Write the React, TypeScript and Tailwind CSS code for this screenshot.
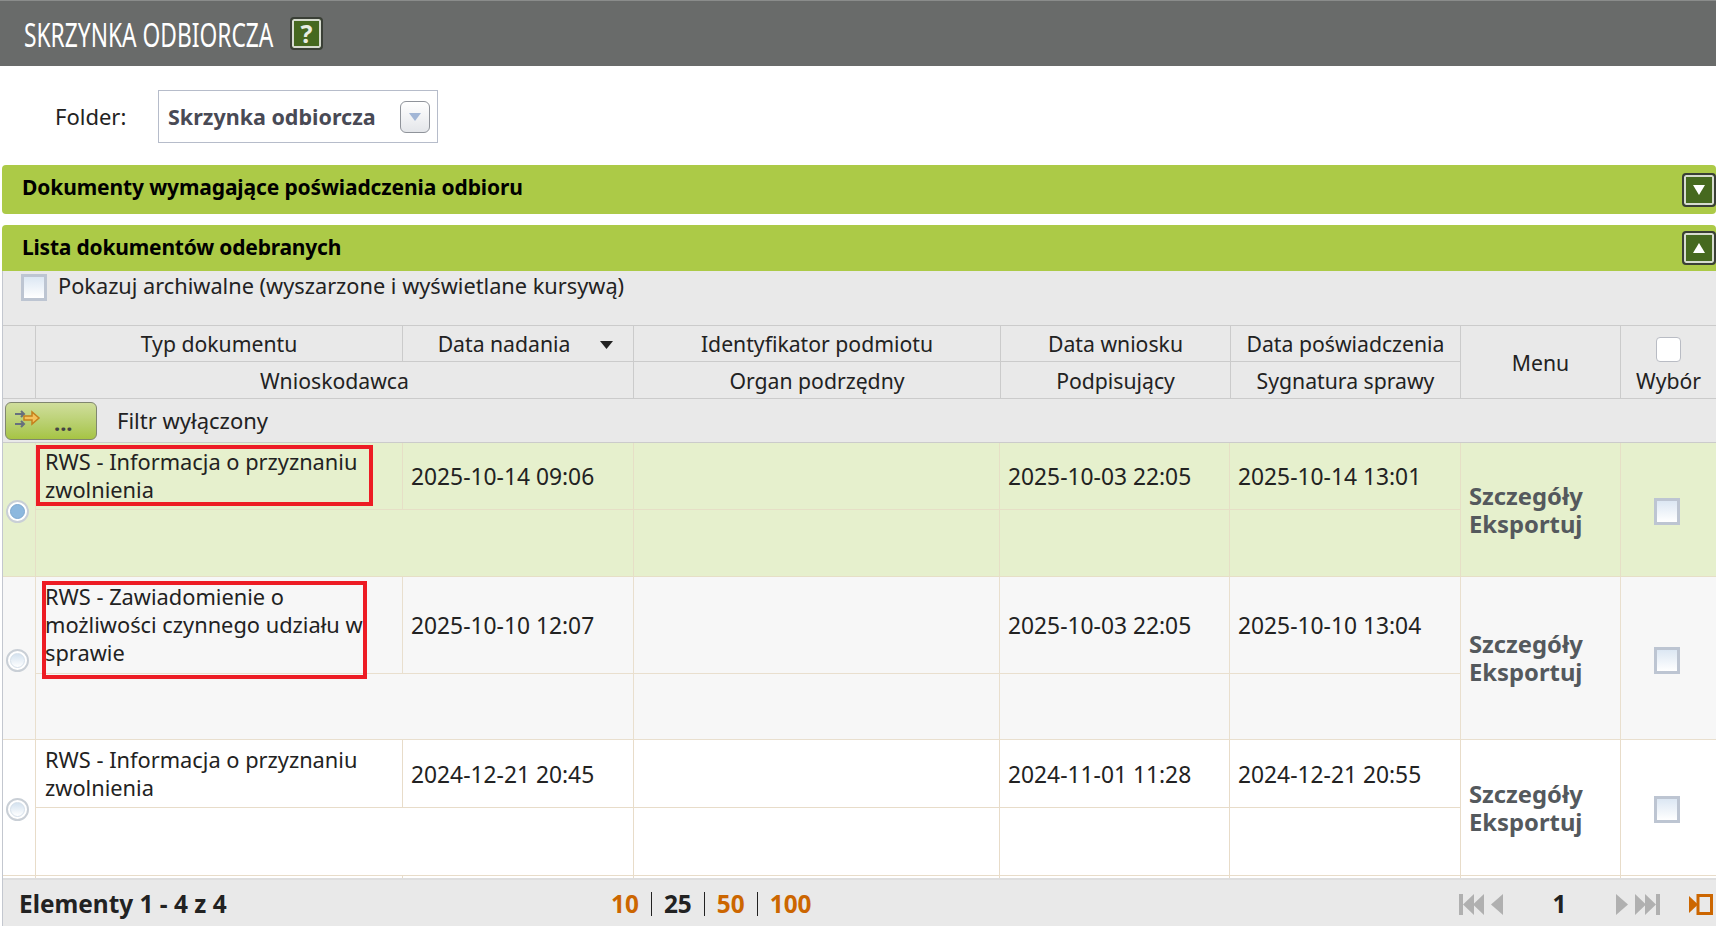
const font = { fontFamily: '"Noto Sans", Tahoma, sans-serif' }

const cols = "grid-cols-[33px_367px_231px_366px_230px_231px_160px_95px]"
const headCols = "grid-cols-[33px_367px_231px_367px_230px_230px_160px_95px]"

function HelpButton({ children }: { children: React.ReactNode }) {
  return (
    <span className="flex h-[33px] w-[33px] items-center justify-center rounded-[4px] border-2 border-[#3a3f36] bg-[#46691f] shadow-[inset_0_0_0_2px_#d7dccf]">
      {children}
    </span>
  )
}

function ToggleButton({ up }: { up?: boolean }) {
  return (
    <span className="flex h-[34px] w-[34px] items-center justify-center rounded-[4px] border-2 border-[#3a3f36] bg-[#46691f] shadow-[inset_0_0_0_2px_#d7dccf]">
      <svg width="14" height="12" viewBox="0 0 14 12">
        <path d={up ? "M7 1 13 11H1Z" : "M7 11 1 1H13Z"} fill="#fff" />
      </svg>
    </span>
  )
}

function Check() {
  return (
    <span className="block h-[27px] w-[26px] border-[3px] border-[#bdc5d2] bg-gradient-to-b from-[#dce7f3] to-white" />
  )
}

function Radio({ on }: { on?: boolean }) {
  return (
    <span className="flex h-[23px] w-[23px] items-center justify-center rounded-full border-2 border-[#c9cfd6] bg-white">
      <span
        className={
          on
            ? "h-[15px] w-[15px] rounded-full border border-[#7ea8cf] bg-[#8db8de]"
            : "h-[15px] w-[15px] rounded-full border border-[#d5e0ea] bg-gradient-to-b from-[#d4e2ef] to-white"
        }
      />
    </span>
  )
}

function Row({
  bg,
  line,
  rows,
  doc,
  sent,
  filed,
  signed,
  box,
  on,
}: {
  bg: string
  line: string
  rows: string
  doc: string
  sent: string
  filed: string
  signed: string
  box?: string
  on?: boolean
}) {
  return (
    <div className={`grid ${cols} ${rows} ${bg} ${line} border-b`}>
      <div className={`row-span-2 flex items-center justify-center border-r pr-[3px] pt-[4px] ${line}`}>
        <Radio on={on} />
      </div>
      <div className={`relative flex items-center border-r border-b pl-[9px] pr-2 text-[21.8px] leading-[28px] ${line}`}>
        {doc}
        {box && <span className={`absolute border-[4px] border-[#ed1c24] ${box}`} />}
      </div>
      <div className={`flex items-center border-r border-b pl-[8px] pt-[3px] text-[22.8px] ${line}`}>{sent}</div>
      <div className={`border-r border-b ${line}`} />
      <div className={`flex items-center border-r border-b pl-[8px] pt-[3px] text-[22.8px] ${line}`}>{filed}</div>
      <div className={`flex items-center border-r border-b pl-[8px] pt-[3px] text-[22.8px] ${line}`}>{signed}</div>
      <div className={`row-span-2 flex flex-col justify-center border-r pl-[8px] text-[23.8px] font-bold leading-[28px] text-[#54595d] ${line}`}>
        <span>Szczegóły</span>
        <span>Eksportuj</span>
      </div>
      <div className="row-span-2 flex items-center justify-center pr-[4px] pt-[4px]">
        <Check />
      </div>
      <div className={`col-span-2 border-r ${line}`} />
      <div className={`border-r ${line}`} />
      <div className={`border-r ${line}`} />
      <div className={`border-r ${line}`} />
    </div>
  )
}

function Head({ className, children }: { className?: string; children?: React.ReactNode }) {
  return <div className={`flex items-center justify-center border-r border-[#cbcbcb] pt-[1px] ${className ?? ""}`}>{children}</div>
}

function FirstIcon({ flip }: { flip?: boolean }) {
  return (
    <svg width="25" height="21" viewBox="0 0 25 21" className={flip ? "-scale-x-100" : ""}>
      <path d="M0 0H4V21H0ZM15 0V21L4 10.5ZM25 0V21L14 10.5Z" fill="#b0b0b0" />
    </svg>
  )
}

function PrevIcon({ flip }: { flip?: boolean }) {
  return (
    <svg width="12" height="21" viewBox="0 0 12 21" className={flip ? "-scale-x-100" : ""}>
      <path d="M12 0V21L0 10.5Z" fill="#b0b0b0" />
    </svg>
  )
}

export default function App() {
  return (
    <div className="h-[926px] w-[1716px] overflow-hidden bg-white text-[22px] text-[#222]" style={font}>
      <header className="flex h-[66px] items-center gap-[14px] border-t border-[#8a8c8b] bg-[#696b6a] pl-6">
        <h1 className="w-[252px] whitespace-nowrap pt-[2px] text-[33px] font-normal text-white">
          <span className="inline-block origin-left scale-x-[0.69]">SKRZYNKA ODBIORCZA</span>
        </h1>
        <HelpButton>
          <span className="text-[25px] font-bold leading-none text-[#e9eee2]">?</span>
        </HelpButton>
      </header>

      <div className="flex h-[99px] items-center pl-[55px] pt-[2px]">
        <span className="w-[103px]">Folder:</span>
        <div className="flex h-[53px] w-[280px] items-center justify-between border border-[#b6bcca] pl-[9px] pr-[7px]">
          <span className="whitespace-nowrap pt-[2px] text-[21.5px] font-bold text-[#494a55]">Skrzynka odbiorcza</span>
          <span className="flex h-[32px] w-[30px] items-center justify-center rounded-[6px] border border-[#8f939a] bg-gradient-to-b from-white to-[#e4e6ea]">
            <svg width="12" height="8" viewBox="0 0 12 8">
              <path d="M0 0H12L6 8Z" fill="#a2b6d6" />
            </svg>
          </span>
        </div>
      </div>

      <div className="ml-[2px] flex h-[49px] items-center justify-between rounded-[4px] bg-[#acca47] pl-[20px] text-[21px] font-bold tracking-[-0.12px] text-black">
        <span className="pb-[4px]">Dokumenty wymagające poświadczenia odbioru</span>
        <ToggleButton />
      </div>

      <div className="ml-[2px] mt-[11px] flex h-[46px] items-center justify-between rounded-t-[4px] bg-[#acca47] pl-[20px] text-[21px] font-bold tracking-[-0.2px] text-black">
        <span className="pb-[1px]">Lista dokumentów odebranych</span>
        <ToggleButton up />
      </div>

      <div className="ml-[2px] border-l border-[#c3c7cf]">
        <div className="flex h-[54px] items-start gap-[11px] bg-[#e9e9e9] pl-[18px] pt-[3px] text-[21.75px]">
          <Check />
          <span className="-mt-[3px] leading-[30px]">Pokazuj archiwalne (wyszarzone i wyświetlane kursywą)</span>
        </div>

        <div className={`grid ${headCols} grid-rows-[36px_36px] border-y border-[#cbcbcb] bg-[#e9e9e9] text-[21.2px]`}>
          <Head className="row-span-2" />
          <Head className="border-b">Typ dokumentu</Head>
          <Head className="relative border-b pr-[28px]">
            Data nadania
            <svg width="13" height="8" viewBox="0 0 13 8" className="absolute right-[20px] top-[15px]">
              <path d="M0 0H13L6.5 8Z" fill="#222" />
            </svg>
          </Head>
          <Head className="border-b">Identyfikator podmiotu</Head>
          <Head className="border-b">Data wniosku</Head>
          <Head className="border-b">Data poświadczenia</Head>
          <Head className="row-span-2">Menu</Head>
          <div className="row-span-2 flex flex-col items-center justify-end pb-[2px]">
            <span className="mb-[4px] h-[25px] w-[25px] rounded-[4px] border border-[#b9bcc4] bg-white" />
            <span className="leading-[30px]">Wybór</span>
          </div>
          <Head className="col-span-2">Wnioskodawca</Head>
          <Head>Organ podrzędny</Head>
          <Head>Podpisujący</Head>
          <Head>Sygnatura sprawy</Head>
        </div>

        <div className="flex h-[44px] items-center gap-[20px] border-b border-[#cbcbcb] bg-[#e9e9e9] pl-[2px]">
          <button className="relative h-[38px] w-[92px] rounded-[6px] border border-[#80866f] bg-gradient-to-b from-[#d0de9c] to-[#a6c443] text-left">
            <svg width="26" height="20" viewBox="0 0 26 20" className="absolute left-[9px] top-[6px]">
              <path d="M0 5H8M0 15H8" stroke="#67707e" strokeWidth="2" />
              <path d="M6 2 9 5 6 8M6 12 9 15 6 18" stroke="#67707e" strokeWidth="2" fill="none" />
              <path d="M9 7H17V3L24 9 17 15V11H9Z" fill="#f4c15c" stroke="#c6801c" strokeWidth="1.5" />
            </svg>
            <span className="absolute left-[48px] top-[3px] font-bold text-[#444]">...</span>
          </button>
          <span>Filtr wyłączony</span>
        </div>

        <Row
          bg="bg-[#e6f0cd]"
          line="border-[#e6dfc6]"
          rows="grid-rows-[67px_66px]"
          doc="RWS - Informacja o przyznaniu zwolnienia"
          sent="2025-10-14 09:06"
          filed="2025-10-03 22:05"
          signed="2025-10-14 13:01"
          box="left-[0px] top-[2px] h-[61px] w-[337px]"
          on
        />
        <Row
          bg="bg-[#f7f7f7]"
          line="border-[#e9dfce]"
          rows="grid-rows-[97px_65px]"
          doc="RWS - Zawiadomienie o możliwości czynnego udziału w sprawie"
          sent="2025-10-10 12:07"
          filed="2025-10-03 22:05"
          signed="2025-10-10 13:04"
          box="left-[6px] top-[4px] h-[98px] w-[325px]"
        />
        <Row
          bg="bg-white"
          line="border-[#e8dcc9]"
          rows="grid-rows-[68px_67px]"
          doc="RWS - Informacja o przyznaniu zwolnienia"
          sent="2024-12-21 20:45"
          filed="2024-11-01 11:28"
          signed="2024-12-21 20:55"
        />
        <div className={`grid ${cols} h-[2px] bg-white`}>
          <div className="border-r border-[#e8dcc9]" />
          <div className="border-r border-[#e8dcc9]" />
          <div className="border-r border-[#e8dcc9]" />
          <div className="border-r border-[#e8dcc9]" />
          <div className="border-r border-[#e8dcc9]" />
          <div className="border-r border-[#e8dcc9]" />
          <div className="border-r border-[#e8dcc9]" />
        </div>

        <footer className="flex h-[50px] items-center border-t-2 border-[#dedede] bg-[#e9e9e9] text-[24.4px] font-bold">
          <span className="w-[608px] pl-[16px]">Elementy 1 - 4 z 4</span>
          <span className="flex w-[848px] items-center gap-[12px]">
            <span className="text-[#cc6600]">10</span>
            <span className="h-[24px] w-px bg-[#222]" />
            <span>25</span>
            <span className="h-[24px] w-px bg-[#222]" />
            <span className="text-[#cc6600]">50</span>
            <span className="h-[24px] w-px bg-[#222]" />
            <span className="text-[#cc6600]">100</span>
          </span>
          <span className="flex items-center gap-[7px]">
            <FirstIcon />
            <PrevIcon />
          </span>
          <span className="w-[113px] text-center">1</span>
          <span className="flex items-center gap-[7px]">
            <PrevIcon flip />
            <FirstIcon flip />
          </span>
          <svg width="24" height="21" viewBox="0 0 24 21" className="ml-[29px]">
            <path d="M0 2 9 10.5 0 19Z" fill="#cc6600" />
            <path d="M9 1.5H22.5V19.5H9Z" fill="none" stroke="#cc6600" strokeWidth="3" />
          </svg>
        </footer>
      </div>
    </div>
  )
}
